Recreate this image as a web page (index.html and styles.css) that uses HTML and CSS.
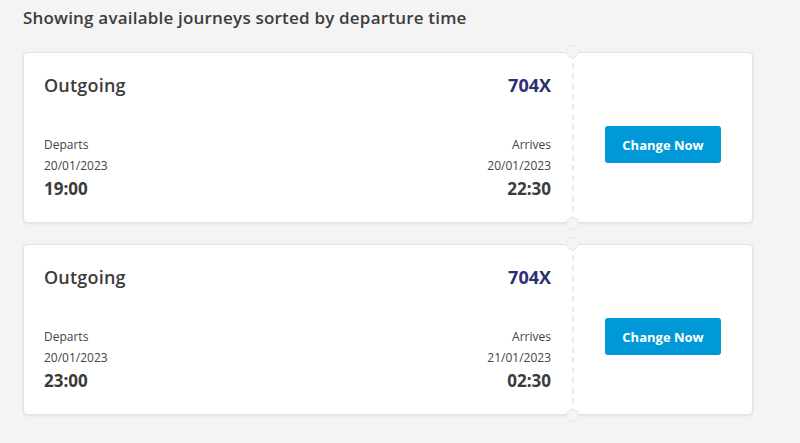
FILE: index.html
```html
<!DOCTYPE html>
<html>
<head>
<meta charset="utf-8">
<link rel="stylesheet" href="styles.css">
</head>
<body>
<div class="page">
  <h2 class="title">Showing available journeys sorted by departure time</h2>
  <div class="card">
    <div class="main">
      <div class="top-row">
        <span class="direction">Outgoing</span>
        <span class="service">704X</span>
      </div>
      <div class="times">
        <div class="col">
          <span class="label">Departs</span>
          <span class="date">20/01/2023</span>
          <span class="time">19:00</span>
        </div>
        <div class="col col-right">
          <span class="label">Arrives</span>
          <span class="date">20/01/2023</span>
          <span class="time">22:30</span>
        </div>
      </div>
    </div>
    <div class="side">
      <span class="notch notch-top"></span>
      <span class="notch notch-bottom"></span>
      <button class="btn">Change Now</button>
    </div>
  </div>
  <div class="card">
    <div class="main">
      <div class="top-row">
        <span class="direction">Outgoing</span>
        <span class="service">704X</span>
      </div>
      <div class="times">
        <div class="col">
          <span class="label">Departs</span>
          <span class="date">20/01/2023</span>
          <span class="time">23:00</span>
        </div>
        <div class="col col-right">
          <span class="label">Arrives</span>
          <span class="date">21/01/2023</span>
          <span class="time">02:30</span>
        </div>
      </div>
    </div>
    <div class="side">
      <span class="notch notch-top"></span>
      <span class="notch notch-bottom"></span>
      <button class="btn">Change Now</button>
    </div>
  </div>
</div>
</body>
</html>
```
FILE: styles.css
```css
html, body {
  margin: 0;
  padding: 0;
  background: #f4f4f4;
  font-family: "Open Sans", "Noto Sans", sans-serif;
  color: #3b3b3b;
}
.page {
  width: 730px;
  padding: 7px 0 0 23px;
}
.title {
  margin: 0 0 23px 0;
  font-size: 17px;
  line-height: 22px;
  font-weight: 600;
  color: #3d3d3d;
  letter-spacing: 0.2px;
}
.card {
  display: flex;
  height: 169px;
  background: #fff;
  border: 1px solid #e3e3e7;
  border-radius: 4px;
  box-shadow: 0 1px 3px rgba(0,0,0,0.07);
  margin-bottom: 21px;
}
.main {
  flex: 1;
  padding: 20px 21px 21px 20px;
  display: flex;
  flex-direction: column;
  justify-content: space-between;
}
.top-row {
  display: flex;
  justify-content: space-between;
  align-items: center;
  line-height: 24px;
}
.direction {
  font-size: 18px;
  font-weight: 600;
  color: #3b3b3b;
  letter-spacing: 0.2px;
}
.service {
  font-size: 18px;
  font-weight: 700;
  color: #2a3170;
}
.times {
  display: flex;
  justify-content: space-between;
}
.col {
  display: flex;
  flex-direction: column;
  align-items: flex-start;
}
.col-right {
  align-items: flex-end;
}
.label, .date {
  font-size: 12px;
  line-height: 21px;
  color: #444;
}
.time {
  font-size: 17px;
  font-weight: 700;
  line-height: 25px;
  color: #3b3b3b;
}
.side {
  position: relative;
  width: 178px;
  border-left: 2px dashed #ebebeb;
  display: flex;
  align-items: center;
  justify-content: center;
}
.notch {
  position: absolute;
  left: -8px;
  width: 13px;
  height: 13px;
  border-radius: 50%;
  background: #f4f4f4;
  border: 1px solid #e6e6e8;
  box-sizing: border-box;
}
.notch-top { top: -8px; }
.notch-bottom { bottom: -8px; }
.btn {
  width: 116px;
  height: 37px;
  border: none;
  border-radius: 3px;
  background: #0099d7;
  color: #fff;
  font-family: "Open Sans", "Noto Sans", sans-serif;
  font-size: 13px;
  font-weight: 700;
  cursor: pointer;
  margin-top: 14px;
}
```
